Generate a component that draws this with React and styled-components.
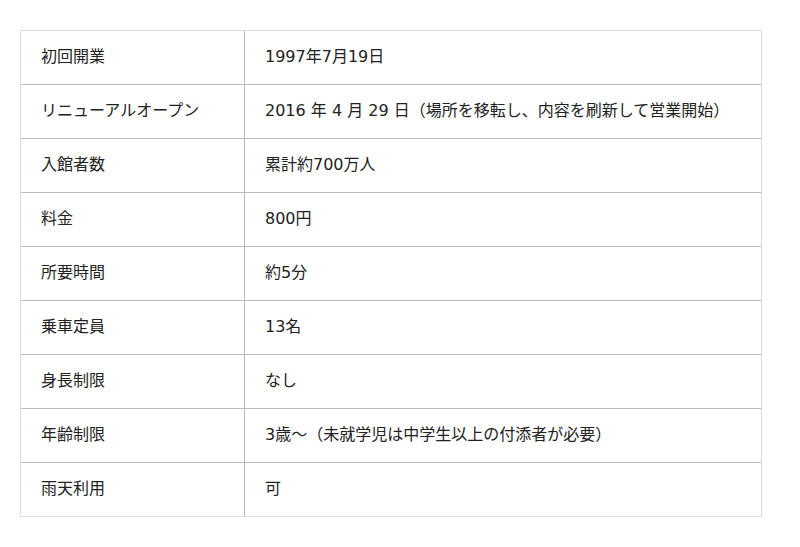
import React from "react";
import styled, { createGlobalStyle } from "styled-components";

const GlobalStyle = createGlobalStyle`
  html, body { margin: 0; padding: 0; background: #ffffff; }
  body {
    font-family: "DejaVu Sans", "Noto Sans CJK JP", sans-serif;
    color: #222222;
  }
`;

const Page = styled.div`
  padding: 30px 38px 30px 20px;
`;

const Table = styled.table`
  width: 742px;
  border-collapse: separate;
  border-spacing: 0;
  border: 1px solid #dddddd;
  font-size: 16px;
`;

const Row = styled.tr`
  & + & > td {
    border-top: 1px solid #bbbbbb;
  }
`;

const Cell = styled.td`
  height: 53px;
  padding: 0 20px;
  box-sizing: content-box;
  vertical-align: middle;
  line-height: 1.4;
  white-space: nowrap;
  ${(p) => (p.$head ? "width: 183px; border-right: 1px solid #bbbbbb;" : "")}
`;

const rows = [
  ["初回開業", "1997年7月19日"],
  ["リニューアルオープン", "2016 年 4 月 29 日（場所を移転し、内容を刷新して営業開始）"],
  ["入館者数", "累計約700万人"],
  ["料金", "800円"],
  ["所要時間", "約5分"],
  ["乗車定員", "13名"],
  ["身長制限", "なし"],
  ["年齢制限", "3歳～（未就学児は中学生以上の付添者が必要）"],
  ["雨天利用", "可"],
];

export default function App() {
  return (
    <>
      <GlobalStyle />
      <Page>
        <Table>
          <tbody>
            {rows.map(([k, v]) => (
              <Row key={k}>
                <Cell $head>{k}</Cell>
                <Cell>{v}</Cell>
              </Row>
            ))}
          </tbody>
        </Table>
      </Page>
    </>
  );
}
